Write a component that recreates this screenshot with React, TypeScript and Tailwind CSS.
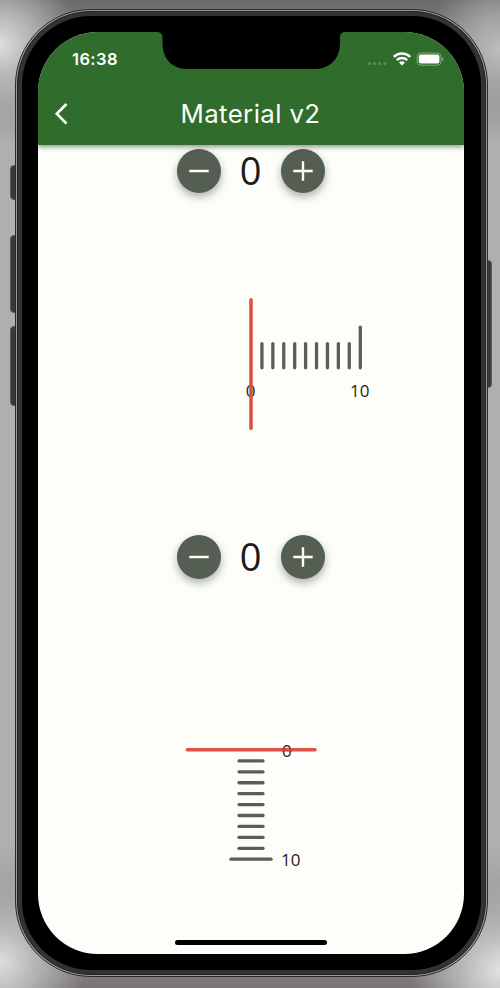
import React from "react";

const ticks = [1, 2, 3, 4, 5, 6, 7, 8, 9];

function RoundButton({ plus = false }: { plus?: boolean }) {
  return (
    <button
      aria-label={plus ? "Increase" : "Decrease"}
      className="flex size-11 items-center justify-center rounded-full bg-[#545e53] shadow-[0_4px_8px_rgba(50,60,50,0.4)]"
    >
      <svg width="22" height="22" viewBox="0 0 22 22" fill="none" stroke="#fdfef8" strokeWidth="2.4">
        <path d={plus ? "M1.3 11H20.7M11 1.3V20.7" : "M1.3 11H20.7"} />
      </svg>
    </button>
  );
}

function Counter({ value }: { value: number }) {
  return (
    <div className="flex h-11 w-full items-center justify-center">
      <RoundButton />
      <span className="w-[60px] pr-px pb-[2px] text-center font-['Open_Sans',sans-serif] text-[38px] leading-[42px] text-[#1a1c19]">
        {value}
      </span>
      <RoundButton plus />
    </div>
  );
}

function HorizontalScale() {
  return (
    <svg width="426" height="150" viewBox="0 0 426 150" strokeLinecap="round" strokeWidth="3.3">
      <g stroke="#5a5e57">
        {ticks.map((t) => (
          <line key={t} x1={213 + t * 10.92} x2={213 + t * 10.92} y1="55.6" y2="79.8" />
        ))}
        <line x1="322.3" x2="322.3" y1="39.2" y2="79.8" />
      </g>
      <g fill="#1a1c19" fontSize="17" textAnchor="middle" fontFamily="'Open Sans', sans-serif">
        <text x="212.5" y="109">0</text>
        <text x="321.8" y="109">10</text>
      </g>
      <line x1="213" x2="213" y1="11.8" y2="140.2" stroke="#d9513c" strokeWidth="3.5" />
    </svg>
  );
}

function VerticalScale() {
  return (
    <svg width="426" height="140" viewBox="0 0 426 140" strokeLinecap="round" strokeWidth="3.3">
      <line x1="149.3" x2="277" y1="19.8" y2="19.8" stroke="#df5147" strokeWidth="3.5" />
      <g stroke="#5a5e57">
        {ticks.map((t) => (
          <line key={t} x1="201" x2="225" y1={20 + t * 10.92} y2={20 + t * 10.92} />
        ))}
        <line x1="193" x2="233" y1="129.2" y2="129.2" />
      </g>
      <g fill="#1a1c19" fontSize="17" fontFamily="'Open Sans', sans-serif">
        <text x="244" y="26.6">0</text>
        <text x="243" y="135.7">10</text>
      </g>
      <line x1="243" x2="255" y1="19.8" y2="19.8" stroke="#df5147" strokeWidth="3.5" strokeOpacity=".7" strokeLinecap="butt" />
    </svg>
  );
}

function StatusBar() {
  return (
    <div className="flex h-[55px] items-center justify-between pr-[20px] pl-[34px] text-white">
      <span className="font-['Inter',sans-serif] text-[16.5px] font-semibold tracking-[0.4px]">16:38</span>
      <svg className="mb-[2px]" width="78" height="16" viewBox="0 0 78 16" fill="none">
        <g fill="#fff" opacity=".22">
          {[3.5, 8.5, 13.7, 18.8].map((x) => (
            <circle key={x} cx={x} cy="12.6" r="1.5" />
          ))}
        </g>
        <g stroke="#fff" strokeWidth="2.5">
          <path d="M27.8 5.9C32.5 1.5 39.5 1.5 44.2 5.9" />
          <path d="M30.8 9.2C33.8 6.4 38.2 6.4 41.2 9.2" />
        </g>
        <path d="M33 11.4C34.8 9.8 37.2 9.8 39 11.4L36 14.4Z" fill="#fff" />
        <rect x="51.2" y="2" width="23.8" height="12.2" rx="3.6" stroke="#fff" strokeOpacity=".4" />
        <rect x="52.8" y="3.6" width="20.6" height="9" rx="2" fill="#fff" />
        <path d="M76.2 6C77.8 6.7 77.8 9.5 76.2 10.2Z" fill="#fff" fillOpacity=".5" />
      </svg>
    </div>
  );
}

export default function App() {
  return (
    <main className="relative h-[988px] w-[500px] overflow-hidden bg-[radial-gradient(circle_at_0_45px,#dedede_0,#bcbcbc_26px,transparent_80px),radial-gradient(circle_at_500px_50px,#bdbdbd_0,#a5a5a5_30px,transparent_75px),radial-gradient(circle_at_0_962px,#dedede_0,#bbb_30px,transparent_85px),radial-gradient(circle_at_500px_970px,#e3e2e3_0,#bbb9bb_35px,transparent_90px),linear-gradient(180deg,#6c6c6c_0,#777_30px,#b0aeaf_145px,#b0aeaf_850px,#858284_965px,#787477_988px)] px-[15px] pt-[9px]">
      <div className="absolute top-[165px] left-[10px] h-[35px] w-2 rounded-l-sm border border-[#5b5b5b] bg-[#383838]" />
      <div className="absolute top-[235px] left-[10px] h-[78px] w-2 rounded-l-sm border border-[#5b5b5b] bg-[#383838]" />
      <div className="absolute top-[326px] left-[10px] h-[80px] w-2 rounded-l-sm border border-[#5b5b5b] bg-[#383838]" />
      <div className="absolute top-[260px] left-[484px] h-[128px] w-[8px] rounded-r-sm border border-[#5b5b5b] bg-[#383838]" />

      <section className="relative h-[968px] w-[473px] rounded-[76px] border border-[#292929] bg-[#9a9a9a] p-px">
        <div className="h-full rounded-[74px] border border-[#202020] bg-[#333] p-[4px]">
          <div className="h-full rounded-[69px] bg-black px-[16px] pt-[16px] pb-[16px]">
            <div className="relative flex h-[922px] w-[426px] flex-col overflow-hidden rounded-[60px] bg-[#fdfef9] font-['Open_Sans',sans-serif]">
              <header className="relative h-[112.5px] shrink-0 bg-[#306c2b] shadow-[0_2px_5px_rgba(30,50,30,0.5)]">
                <StatusBar />
                <div className="flex h-[54px] items-center">
                  <svg className="ml-[16px]" width="16" height="24" viewBox="0 0 16 24" fill="none" stroke="#fdfef8" strokeWidth="2.7">
                    <path d="M12.5 2L2.8 11.8L12.5 21.6" />
                  </svg>
                  <h1 className="w-[361px] text-center font-['Inter',sans-serif] text-[25.8px] leading-8 font-normal tracking-[0.4px] text-[#fdfef8]">
                    Material v2
                  </h1>
                </div>
              </header>
              <svg className="absolute top-0 left-[118px]" width="190" height="37" viewBox="0 0 190 37">
                <path d="M0 0H190C185.5 0 184 1.8 184 6V11C184 26.5 174 37 159 37H31C16 37 6.5 26.5 6.5 11V6C6.5 1.8 4.5 0 0 0Z" fill="#000" />
              </svg>
              <div className="flex flex-1 flex-col pt-[4.5px]">
                <Counter value={0} />
                <div className="mt-[95px] h-[150px]"><HorizontalScale /></div>
                <div className="mt-[97px]"><Counter value={0} /></div>
                <div className="mt-[151px] h-[140px]"><VerticalScale /></div>
                <div className="mt-auto mb-[9px] h-[5.5px] w-[152px] self-center rounded-full bg-black" />
              </div>
            </div>
          </div>
        </div>
      </section>
    </main>
  );
}
